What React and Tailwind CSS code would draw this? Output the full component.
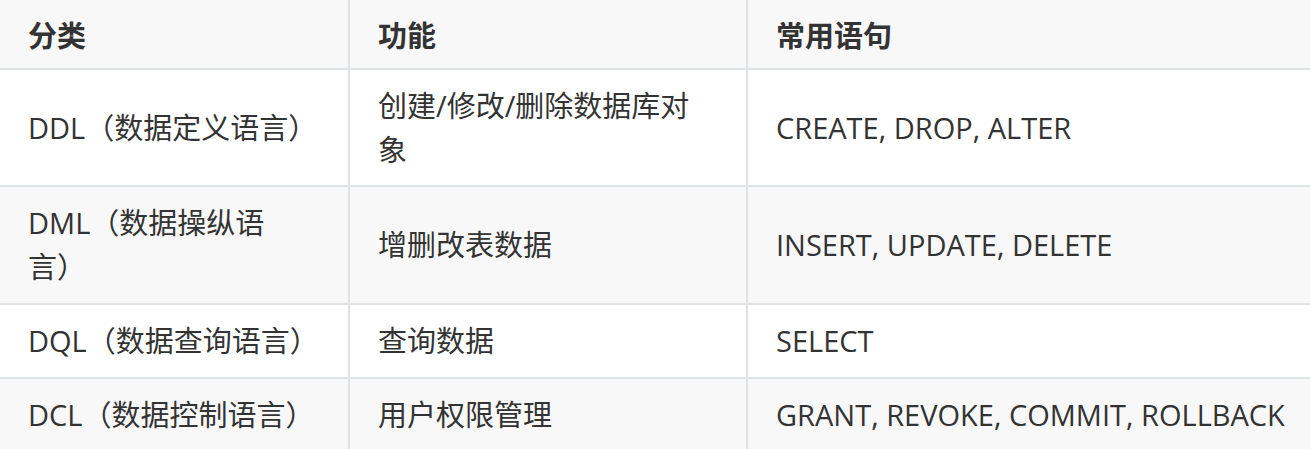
export default function App() {
  const rows = [
    ["DDL（数据定义语言）", ["创建/修改/删除数据库对", "象"], "CREATE, DROP, ALTER"],
    [["DML（数据操纵语", "言）"], "增删改表数据", "INSERT, UPDATE, DELETE"],
    ["DQL（数据查询语言）", "查询数据", "SELECT"],
    ["DCL（数据控制语言）", "用户权限管理", "GRANT, REVOKE, COMMIT, ROLLBACK"],
  ];
  const font = { fontFamily: '"Open Sans", "Noto Sans CJK SC", sans-serif' };
  return (
    <div className="w-[1310px] h-[449px] overflow-hidden bg-white" style={font}>
      <div className="grid grid-cols-[348px_396px_562px] grid-rows-[68px_115px_116px_72px_72px] gap-[2px] bg-[#dfe2e5] text-[29px] leading-[44px] text-[#333333]">
        {["分类", "功能", "常用语句"].map((h) => (
          <div key={h} className="flex items-center bg-[#f8f8f8] pl-[28px] pt-[4px] font-bold">
            {h}
          </div>
        ))}
        {rows.map((r, i) =>
          r.map((c, j) => (
            <div
              key={i + "-" + j}
              className={
                "flex items-center pl-[28px] whitespace-nowrap " +
                (i % 2 === 1 ? "bg-[#f8f8f8]" : "bg-white")
              }
            >
              {Array.isArray(c) ? (
                <span>
                  {c[0]}
                  <br />
                  {c[1]}
                </span>
              ) : (
                <span>{c}</span>
              )}
            </div>
          ))
        )}
      </div>
    </div>
  );
}
